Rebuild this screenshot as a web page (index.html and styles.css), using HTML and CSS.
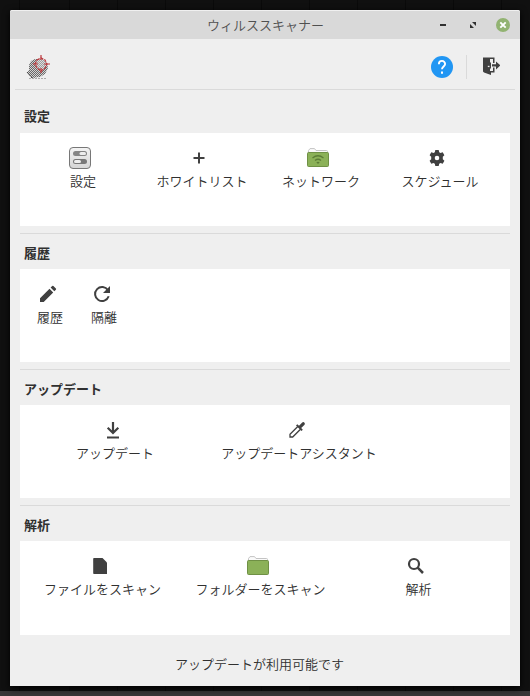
FILE: index.html
```
<!DOCTYPE html>
<html lang="ja">
<head>
<meta charset="utf-8">
<title>ウィルススキャナー</title>
<link rel="stylesheet" href="styles.css">
</head>
<body>
<svg class="defs" aria-hidden="true">
  <symbol id="folder" viewBox="0 0 24 24">
    <path d="M2.500 7V4.500l1.500-1.900h4.500l1.500 1.900h10.500q1 0 1 1V8" fill="#fafafa" stroke="#c4c4c4"/>
    <rect x="1.500" y="6.500" width="21" height="14" rx="1" fill="#8bb158" stroke="#6f9045"/>
  </symbol>
</svg>
<main class="window">
  <header class="titlebar">
    <h1 class="title">ウィルススキャナー</h1>
    <div class="controls">
      <svg width="14" height="14" viewBox="0 0 14 14"><path d="M4 6h6v2H4z" fill="#303030"/></svg>
      <svg width="14" height="14" viewBox="0 0 14 14"><path d="M6 4h4v4zM4 6v4h4z" fill="#303030"/></svg>
      <svg width="14" height="14" viewBox="0 0 14 14"><circle cx="7" cy="7" r="7" fill="#92b372"/><path d="M4.300 4.300l5.400 5.400m0-5.400l-5.400 5.400" stroke="#fff" stroke-width="1.900"/></svg>
    </div>
  </header>
  <div class="toolbar">
    <svg class="logo" width="24" height="24" viewBox="0 0 24 24">
      <defs><pattern id="mesh" width="2" height="2" patternUnits="userSpaceOnUse"><rect width="2" height="2" fill="#d2d2d2"/><path d="M0 0h1v1H0zM1 1h1v1H1z" fill="#686868"/></pattern></defs>
      <path d="M5 6l4-2h8l4 4 1 5-3 6-5 3-5 .5-2 1.500-6-6 2-3 0-5z" fill="url(#mesh)"/>
      <path d="M1 17l5 6" stroke="#444" stroke-dasharray="2 1"/>
      <path d="M3 23.500h18" stroke="#aaa" stroke-dasharray="2 1"/>
      <path d="M11 5l4-2 4 2 2 4-2 4-4 3-4-3-2-4z" fill="#eee" fill-opacity=".4" stroke="#bc383d" stroke-width="1.200" stroke-dasharray="3 1"/>
      <path d="M15 0v5m0 8v5M7 9h5m6 0h6" stroke="#bc383d" stroke-width="1.200"/>
    </svg>
    <div class="actions">
      <svg width="22" height="22" viewBox="0 0 22 22"><circle cx="11" cy="11" r="11" fill="#2196f3"/><path d="M7.900 8.300V8a3.100 3.100 0 0 1 6.200 0c0 2.400-3.100 2.600-3.100 5.300" fill="none" stroke="#fff" stroke-width="1.900"/><path d="M10 15.600h2v2.200h-2z" fill="#fff"/></svg>
      <span class="divider"></span>
      <svg class="exit" width="18" height="18" viewBox="0 0 18 18"><path d="M1 .500h11.500V6H11V2H8v3.500h1v6H8V14h3v-3.500h1.500v5H9V18l-7-2.500-1-1z" fill="#404040"/><path d="M10 7.200h4V4.500l4.500 3.900-4.500 4V9.600h-4z" fill="#404040"/><path d="M5.800 8.800h1.700v1.300H5.800z" fill="#eee"/></svg>
    </div>
  </div>

  <section class="group">
    <h2>設定</h2>
    <div class="panel settings">
      <div class="item">
        <svg width="24" height="24" viewBox="0 0 24 24"><defs><linearGradient id="plate" x2="0" y2="1"><stop stop-color="#f4f4f4"/><stop offset="1" stop-color="#d5d5d5"/></linearGradient></defs><rect x="1.500" y="1.500" width="21" height="21" rx="3.500" fill="url(#plate)" stroke="#777"/><rect x="5" y="5" width="14" height="5" rx="2.500" fill="#858585"/><rect x="11.500" y="6" width="6.500" height="3" rx="1.500" fill="#eee"/><rect x="5" y="13" width="14" height="5" rx="2.500" fill="#777"/><rect x="6" y="14" width="7" height="3" rx="1.500" fill="#eee"/></svg>
        <span>設定</span>
      </div>
      <div class="item">
        <svg width="24" height="24" viewBox="0 0 24 24"><path d="M11 6.500h2V11h4.500v2H13v4.500h-2V13H6.500v-2H11z" fill="#404040"/></svg>
        <span>ホワイトリスト</span>
      </div>
      <div class="item">
        <svg width="24" height="24" viewBox="0 0 24 24"><use href="#folder"/><g fill="none" stroke="#5c7c37" stroke-width="1.300"><path d="M6.500 12q5.500-4.500 11 0"/><path d="M9 14.500q3-2.500 6 0"/></g><path d="M10.300 16.200q1.700-1 3.400 0L12 18z" fill="#5c7c37"/></svg>
        <span>ネットワーク</span>
      </div>
      <div class="item">
        <svg width="24" height="24" viewBox="0 0 24 24"><path fill="#404040" fill-rule="evenodd" d="M10.300 4h3.400l.5 2.200 1.300.8 2.200-.7 1.700 3-1.600 1.500v2.400l1.600 1.500-1.700 3-2.200-.7-1.300.8-.5 2.200h-3.400l-.5-2.200-1.300-.8-2.200.7-1.700-3 1.600-1.500v-2.400L4.600 9.300l1.700-3 2.200.7 1.300-.8zM12 9.700a2.300 2.300 0 1 0 0 4.600 2.300 2.300 0 1 0 0-4.600z"/></svg>
        <span>スケジュール</span>
      </div>
    </div>
  </section>

  <section class="group">
    <h2>履歴</h2>
    <div class="panel history">
      <div class="item">
        <svg width="24" height="24" viewBox="0 0 24 24"><path d="M4 16.200L13.500 6.700l3.700 3.700-9.500 9.500H4zM14.600 5.600l1.600-1.600q.6-.5 1.200 0l2.500 2.500q.5.600 0 1.200l-1.600 1.600z" fill="#404040"/></svg>
        <span>履歴</span>
      </div>
      <div class="item">
        <svg width="24" height="24" viewBox="0 0 24 24"><path d="M18.700 14.300a7 7 0 1 1-.7-6" fill="none" stroke="#404040" stroke-width="2"/><path d="M20 4v7h-7z" fill="#404040"/></svg>
        <span>隔離</span>
      </div>
    </div>
  </section>

  <section class="group">
    <h2>アップデート</h2>
    <div class="panel update">
      <div class="item">
        <svg width="24" height="24" viewBox="0 0 24 24"><path d="M12 4v10.500M6.700 9.700l5.300 5.300 5.300-5.300M6 19.500h12" fill="none" stroke="#404040" stroke-width="2.200"/></svg>
        <span>アップデート</span>
      </div>
      <div class="item">
        <svg width="24" height="24" viewBox="0 0 24 24"><path d="M12.800 8.500L5 16.300V19h2.700l7.800-7.800" fill="none" stroke="#404040" stroke-width="1.300"/><path d="M11 7.500l1.300-1.300 1.700 1.600L17 4.700q1.300-1.200 2.500 0 1 1.200-.2 2.300l-3.100 3.100 1.600 1.600-1.300 1.300z" fill="#404040"/></svg>
        <span>アップデートアシスタント</span>
      </div>
    </div>
  </section>

  <section class="group">
    <h2>解析</h2>
    <div class="panel scan">
      <div class="item">
        <svg width="24" height="24" viewBox="0 0 24 24"><path d="M6 4h8.500L19 8.500V20H6q-.8 0-.8-.8V4.800Q5.200 4 6 4z" fill="#404040"/></svg>
        <span>ファイルをスキャン</span>
      </div>
      <div class="item">
        <svg width="24" height="24" viewBox="0 0 24 24"><use href="#folder"/></svg>
        <span>フォルダーをスキャン</span>
      </div>
      <div class="item">
        <svg width="24" height="24" viewBox="0 0 24 24"><circle cx="10" cy="10" r="5" fill="none" stroke="#404040" stroke-width="2.200"/><path d="M13.700 13.700l5.300 5.300" stroke="#404040" stroke-width="2.500"/></svg>
        <span>解析</span>
      </div>
    </div>
  </section>
  <footer class="status">アップデートが利用可能です</footer>
</main>
</body>
</html>
```
FILE: styles.css
```
* { box-sizing: border-box; }
body {
  margin: 0;
  padding: 10px;
  height: 696px;
  overflow: hidden;
  font: 13px/20px "Noto Sans CJK JP", sans-serif;
  color: #303030;
  background:
    linear-gradient(#383637, #383637) 0 100% / 100% 5px no-repeat,
    repeating-linear-gradient(90deg, transparent 0 47px, #0a0a0a 47px 48px) 22px 0,
    #101010;
}
svg { display: block; flex: none; }
.defs { position: absolute; width: 0; height: 0; }
.window {
  width: 510px;
  height: 676px;
  background: #efefef;
  border-radius: 2px 2px 0 0;
  box-shadow: 0 2px 7px #000;
}
.titlebar {
  display: grid;
  grid-template-columns: 82px 1fr 82px;
  align-items: center;
  height: 29px;
  background: #d9d9d9;
  border-top: 1px solid #f0f0f0;
  border-radius: 2px 2px 0 0;
}
.title {
  grid-column: 2;
  margin: 0;
  padding: 0 0 1px 1px;
  font-size: 13px;
  font-weight: 350;
  line-height: 20px;
  text-align: center;
  color: #505050;
}
.controls { display: flex; gap: 16px; margin-left: -2px; }
.toolbar {
  display: flex;
  justify-content: space-between;
  height: 51px;
  margin: 0 5px;
  padding: 16px 15px 0 11px;
  border-bottom: 1px solid #dadada;
}
.actions { display: flex; }
.actions svg:first-child { margin-top: 1px; }
.divider { width: 1px; height: 24px; margin: 0 15px 0 13px; background: #dadada; }
.actions { margin-right: 0; }
.exit { margin-top: 2px; }
.group { height: 136px; margin: 0 10px; padding-top: 10px; }
.group h2 {
  height: 33px;
  margin: 0;
  padding: 6px 0 0 4px;
  font-size: 13px;
  line-height: 20px;
}
.group + .group h2 { padding-top: 7px; }
.panel {
  display: grid;
  height: 93px;
  padding: 13px 0 0 3px;
  background: #fff;
}
.group:not(:last-of-type)::after {
  content: "";
  display: block;
  height: 1px;
  margin-top: 7px;
  background: #dadada;
}
.group:last-of-type .panel { height: 94px; }
.settings { grid-template-columns: repeat(4, 119px); }
.history { grid-template-columns: repeat(2, 54px); }
.update { grid-template-columns: repeat(2, 184px); }
.scan { grid-template-columns: repeat(3, 158px); }
.item {
  display: flex;
  flex-direction: column;
  align-items: center;
  white-space: nowrap;
}
.item svg { margin-right: 5px; }
.item span { font-weight: 350; margin-top: 1px; }
.settings span, .scan span { padding-left: 1px; }
.status { padding-top: 20px; text-align: center; font-weight: 350; margin-right: 11px; }
```
